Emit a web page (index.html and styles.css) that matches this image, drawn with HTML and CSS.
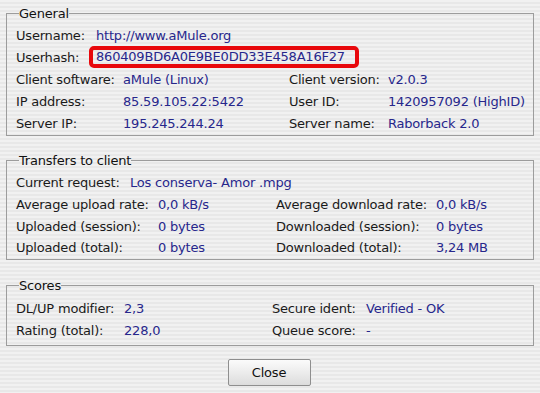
FILE: index.html
```html
<!DOCTYPE html>
<html>
<head>
<meta charset="utf-8">
<link rel="stylesheet" href="styles.css">
</head>
<body>
<div class="dialog">
  <fieldset class="box box-general">
    <legend>General</legend>
    <div class="grid grid-top">
      <span class="lbl">Username:</span><span class="val">http://www.aMule.org</span>
      <span class="lbl">Userhash:</span><span class="val"><span class="mark">860409BD6A0E9BE0DD33E458A16F27</span></span>
    </div>
    <div class="grid grid-gen">
      <span class="lbl">Client software:</span><span class="val">aMule (Linux)</span>
      <span class="lbl">Client version:</span><span class="val">v2.0.3</span>
      <span class="lbl">IP address:</span><span class="val">85.59.105.22:5422</span>
      <span class="lbl">User ID:</span><span class="val">1420957092 (HighID)</span>
      <span class="lbl">Server IP:</span><span class="val">195.245.244.24</span>
      <span class="lbl">Server name:</span><span class="val">Raborback 2.0</span>
    </div>
  </fieldset>

  <fieldset class="box box-transfer">
    <legend>Transfers to client</legend>
    <div class="grid grid-req">
      <span class="lbl">Current request:</span><span class="val">Los conserva- Amor .mpg</span>
    </div>
    <div class="grid grid-tr">
      <span class="lbl">Average upload rate:</span><span class="val">0,0 kB/s</span>
      <span class="lbl">Average download rate:</span><span class="val">0,0 kB/s</span>
      <span class="lbl">Uploaded (session):</span><span class="val">0 bytes</span>
      <span class="lbl">Downloaded (session):</span><span class="val">0 bytes</span>
      <span class="lbl">Uploaded (total):</span><span class="val">0 bytes</span>
      <span class="lbl">Downloaded (total):</span><span class="val">3,24 MB</span>
    </div>
  </fieldset>

  <fieldset class="box box-scores">
    <legend>Scores</legend>
    <div class="grid grid-sc">
      <span class="lbl">DL/UP modifier:</span><span class="val">2,3</span>
      <span class="lbl">Secure ident:</span><span class="val">Verified - OK</span>
      <span class="lbl">Rating (total):</span><span class="val">228,0</span>
      <span class="lbl">Queue score:</span><span class="val">-</span>
    </div>
  </fieldset>

  <div class="actions">
    <button class="btn">Close</button>
  </div>
</div>
</body>
</html>
```

FILE: styles.css
```css
html, body {
  margin: 0;
  padding: 0;
}
body {
  width: 540px;
  height: 393px;
  overflow: hidden;
  font-family: "DejaVu Sans", "Liberation Sans", sans-serif;
  font-size: 13px;
  letter-spacing: -0.2px;
  color: #1a1a1a;
  background: repeating-linear-gradient(to bottom, #f1f1f1 0, #f1f1f1 2px, #e8e8e8 2px, #e8e8e8 4px);
}
.dialog {
  padding: 6px 6px 0 6px;
  display: flex;
  flex-direction: column;
}
.box {
  margin: 0;
  border: 1px solid #9c9c9c;
  padding: 0 0 0 9px;
  min-width: 0;
}
.box legend {
  padding: 0;
  margin-left: 3px;
  line-height: 15px;
  color: #111;
}
.box-general {
  padding-top: 3px;
  padding-bottom: 1px;
}
.box-transfer {
  margin-top: 17px;
  padding-top: 4px;
  padding-bottom: 0;
}
.box-scores {
  margin-top: 18px;
  padding-top: 5px;
  padding-bottom: 4px;
}
.grid {
  display: grid;
  grid-auto-rows: 22px;
  align-items: center;
  white-space: nowrap;
}
.grid-top {
  grid-template-columns: 80px 1fr;
}
.grid-gen {
  grid-template-columns: 107px 166px 99px 1fr;
}
.grid-req {
  grid-template-columns: 114px 1fr;
}
.grid-tr {
  grid-template-columns: 142px 118px 160px 1fr;
}
.grid-tr, .grid-req, .grid-sc {
  grid-auto-rows: 21.7px;
}
.grid-sc {
  grid-template-columns: 108px 148px 94px 1fr;
}
.lbl {
  color: #1a1a1a;
}
.val {
  color: #27278c;
}
.mark {
  display: inline-block;
  box-sizing: border-box;
  height: 22px;
  line-height: 14px;
  margin-left: -7px;
  padding: 0 10px 0 3px;
  border: 4px solid #e8080c;
  border-radius: 5px;
}
.actions {
  display: flex;
  justify-content: center;
  padding-top: 13px;
}
.btn {
  width: 83px;
  height: 27px;
  margin-left: -2px;
  font-family: "DejaVu Sans", "Liberation Sans", sans-serif;
  font-size: 13px;
  letter-spacing: -0.2px;
  color: #111;
  border: 1px solid #8e8e8e;
  border-radius: 2px;
  background: linear-gradient(to bottom, #fbfbfb 0%, #ececec 50%, #dcdcdc 100%);
  padding: 0;
}
```
